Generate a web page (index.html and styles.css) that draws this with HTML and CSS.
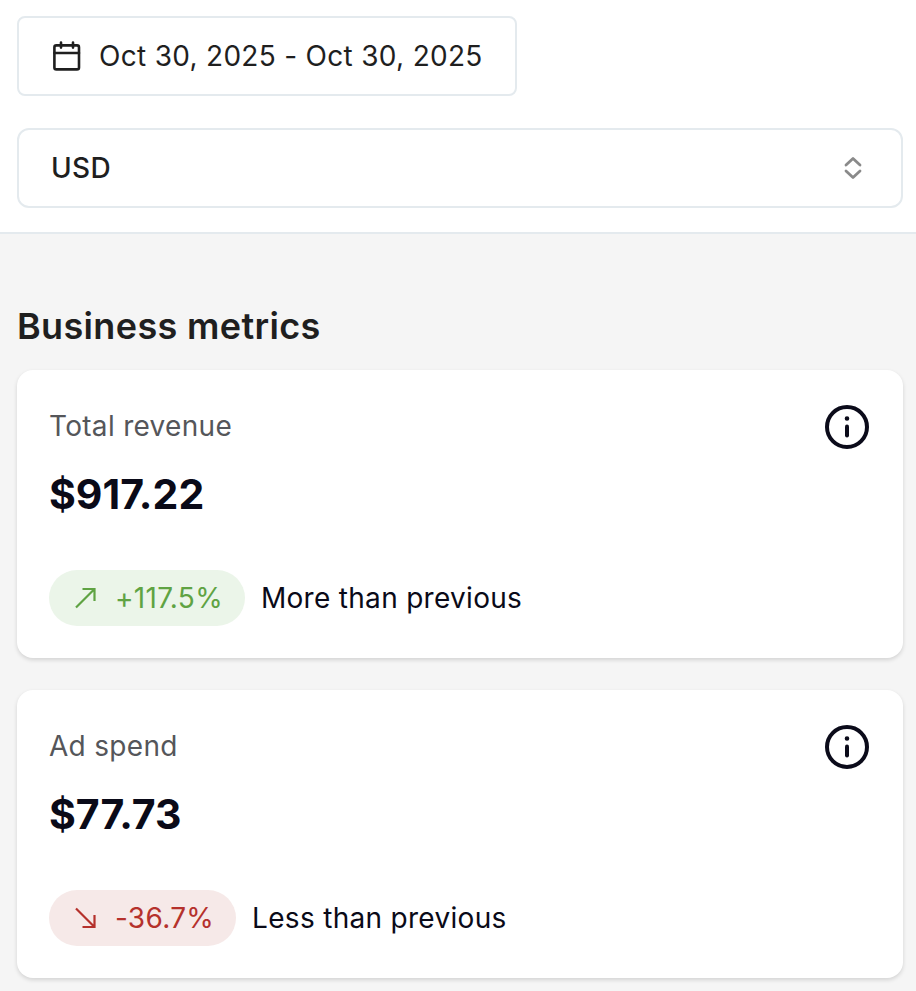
FILE: index.html
```html
<!DOCTYPE html>
<html lang="en">
  <head>
    <meta charset="UTF-8" />
    <title>Business metrics</title>
    <link rel="stylesheet" href="styles.css">
  </head>
  <body>
    <div class="filters">
      <button class="date-button">
        <svg class="calendar-icon" width="32" height="32" viewBox="0 0 32 32" fill="none" stroke="#1f1f1f" stroke-width="2.6" stroke-linecap="round" stroke-linejoin="round">
          <rect x="3.4" y="5.4" width="24.6" height="24" rx="2" />
          <path d="M3.4 13h24.6M10 2.6v5M22 2.6v5" />
        </svg>
        <span>Oct 30, 2025 - Oct 30, 2025</span>
      </button>
      <div class="currency-select">
        <span>USD</span>
        <svg width="18" height="26" viewBox="0 0 18 26" fill="none" stroke="#8a8a8a" stroke-width="2.8" stroke-linecap="round" stroke-linejoin="round">
          <path d="M2 10L9 3.5 16 10M2 16l7 6.5 7-6.5" />
        </svg>
      </div>
    </div>

    <div class="content">
      <h2 class="section-title">Business metrics</h2>

      <div class="card">
        <div class="card-top">
          <div class="card-label">Total revenue</div>
          <svg class="info-icon" width="44" height="44" viewBox="0 0 44 44" fill="none" stroke="#0b0b1a" stroke-width="4" stroke-linecap="round">
            <circle cx="22" cy="22" r="20" />
            <path d="M22 21.5v9" />
            <circle cx="22" cy="13.5" r="1.4" fill="#0b0b1a" stroke-width="1.8" />
          </svg>
        </div>
        <div class="card-value">$917.22</div>
        <div class="card-bottom">
          <span class="pill pill-up">
            <svg width="26" height="26" viewBox="0 0 26 26" fill="none" stroke="currentColor" stroke-width="2.2">
              <path d="M3 22.5L21.5 4M9.5 4h12v12" />
            </svg>
            +117.5%
          </span>
          <span class="compare">More than previous</span>
        </div>
      </div>

      <div class="card">
        <div class="card-top">
          <div class="card-label">Ad spend</div>
          <svg class="info-icon" width="44" height="44" viewBox="0 0 44 44" fill="none" stroke="#0b0b1a" stroke-width="4" stroke-linecap="round">
            <circle cx="22" cy="22" r="20" />
            <path d="M22 21.5v9" />
            <circle cx="22" cy="13.5" r="1.4" fill="#0b0b1a" stroke-width="1.8" />
          </svg>
        </div>
        <div class="card-value">$77.73</div>
        <div class="card-bottom">
          <span class="pill pill-down">
            <svg width="26" height="26" viewBox="0 0 26 26" fill="none" stroke="currentColor" stroke-width="2.2">
              <path d="M3 3.5L21.5 22M9.5 22h12V10" />
            </svg>
            -36.7%
          </span>
          <span class="compare">Less than previous</span>
        </div>
      </div>
    </div>
  </body>
</html>
```

FILE: styles.css
```css
* {
  box-sizing: border-box;
}
html,
body {
  margin: 0;
  height: 100%;
  overflow: hidden;
}
body {
  font-family: Inter, "Liberation Sans", sans-serif;
  background-color: #f5f5f5;
  color: #1f1f1f;
}
.filters {
  background-color: white;
  padding: 16px 13px 24px 17px;
  border-bottom: 2px solid #e4eaee;
  height: 234px;
}
.date-button {
  display: flex;
  align-items: center;
  gap: 16px;
  width: 500px;
  height: 80px;
  padding: 0 32px;
  background-color: white;
  border: 2px solid #e4eaee;
  border-radius: 8px;
  color: #1f1f1f;
  font-family: inherit;
  font-size: 28px;
  letter-spacing: 0.3px;
}
.calendar-icon {
  flex-shrink: 0;
}
.currency-select {
  display: flex;
  align-items: center;
  justify-content: space-between;
  height: 80px;
  margin-top: 32px;
  padding: 0 39px 0 32px;
  border: 2px solid #e4eaee;
  border-radius: 12px;
  font-size: 28px;
  font-weight: 500;
  letter-spacing: 0.3px;
}
.content {
  padding: 68px 13px 0 17px;
}
.section-title {
  margin: 0 0 20px;
  font-size: 36px;
  line-height: 48px;
  font-weight: 600;
  letter-spacing: 0.35px;
}
.card {
  height: 288px;
  margin-bottom: 32px;
  padding: 32px 34px 32px 32px;
  background-color: white;
  border-radius: 16px;
  box-shadow: 0 2px 4px rgba(0, 0, 0, 0.14);
}
.card-top {
  display: flex;
  justify-content: space-between;
  height: 48px;
}
.info-icon {
  margin-top: 3px;
}
.card-label {
  font-size: 28px;
  line-height: 48px;
  letter-spacing: 0.3px;
  color: #55565a;
}
.card-value {
  margin-top: 16px;
  font-size: 41px;
  line-height: 56px;
  font-weight: 700;
  color: #0a0a18;
}
.card-bottom {
  display: flex;
  align-items: center;
  gap: 16px;
  margin-top: 48px;
}
.pill {
  display: flex;
  align-items: center;
  gap: 16px;
  height: 56px;
  padding: 0 22px 0 24px;
  border-radius: 28px;
  font-size: 28px;
  letter-spacing: 0.3px;
}
.pill-up {
  background-color: #ebf5e9;
  color: #5fa343;
}
.pill-down {
  background-color: #f6e9e8;
  color: #b5312c;
}
.compare {
  font-size: 28px;
  letter-spacing: 0.3px;
  color: #0a0a18;
}
```
